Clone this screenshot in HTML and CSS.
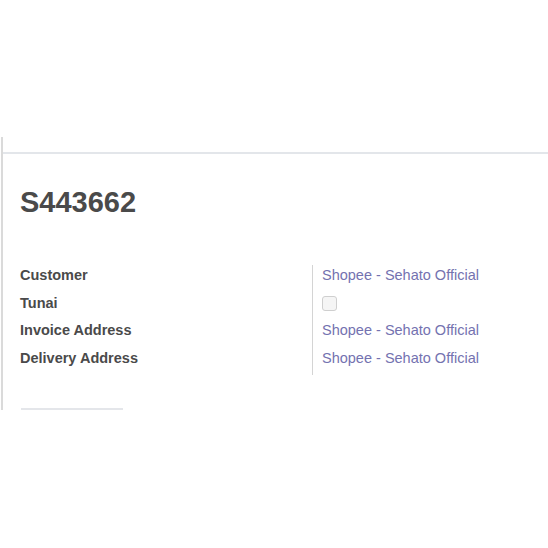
FILE: index.html
```html
<!DOCTYPE html>
<html>
<head>
<meta charset="utf-8">
<link rel="stylesheet" href="styles.css">
</head>
<body>
<div class="top-space"></div>
<div class="sheet">
  <div class="sheet-head"></div>
  <div class="sheet-body">
    <h1 class="title">S443662</h1>
    <div class="fields">
      <div class="label">Customer</div>
      <div class="value"><a class="link">Shopee - Sehato Official</a></div>
      <div class="label">Tunai</div>
      <div class="value"><span class="checkbox"></span></div>
      <div class="label">Invoice Address</div>
      <div class="value"><a class="link">Shopee - Sehato Official</a></div>
      <div class="label">Delivery Address</div>
      <div class="value"><a class="link">Shopee - Sehato Official</a></div>
    </div>
    <div class="tab-line"></div>
  </div>
</div>
</body>
</html>
```

FILE: styles.css
```css
html, body {
  margin: 0;
  padding: 0;
  background: #ffffff;
  font-family: "Liberation Sans", Arial, sans-serif;
  color: #444444;
}
.top-space {
  height: 137px;
}
.sheet {
  margin-left: 1px;
  border-left: 2px solid #dadada;
  height: 273px;
  display: flex;
  flex-direction: column;
}
.sheet-head {
  height: 15px;
  border-bottom: 2px solid #e3e6ea;
}
.sheet-body {
  flex: 1;
  display: flex;
  flex-direction: column;
  padding-left: 17px;
}
.title {
  margin: 29.5px 0 0 0;
  font-size: 29px;
  line-height: 36px;
  font-weight: bold;
  color: #4a4a4a;
}
.fields {
  margin-top: 45.5px;
  display: grid;
  grid-template-columns: 292px 1fr;
  grid-auto-rows: 27.5px;
}
.label {
  font-size: 14.5px;
  line-height: 20px;
  font-weight: bold;
  color: #4a4a4a;
}
.value {
  border-left: 1px solid #d4d4d4;
  padding-left: 9px;
  font-size: 14.5px;
  line-height: 20px;
}
.link {
  color: #7472b0;
  text-decoration: none;
}
.checkbox {
  display: block;
  margin-top: 3.5px;
  width: 13px;
  height: 13px;
  border: 1px solid #cfcfcf;
  border-radius: 3px;
  background: #f5f5f5;
}
.tab-line {
  margin-top: auto;
  margin-left: 1px;
  width: 102px;
  height: 2px;
  background: #e4e6ea;
}
```
